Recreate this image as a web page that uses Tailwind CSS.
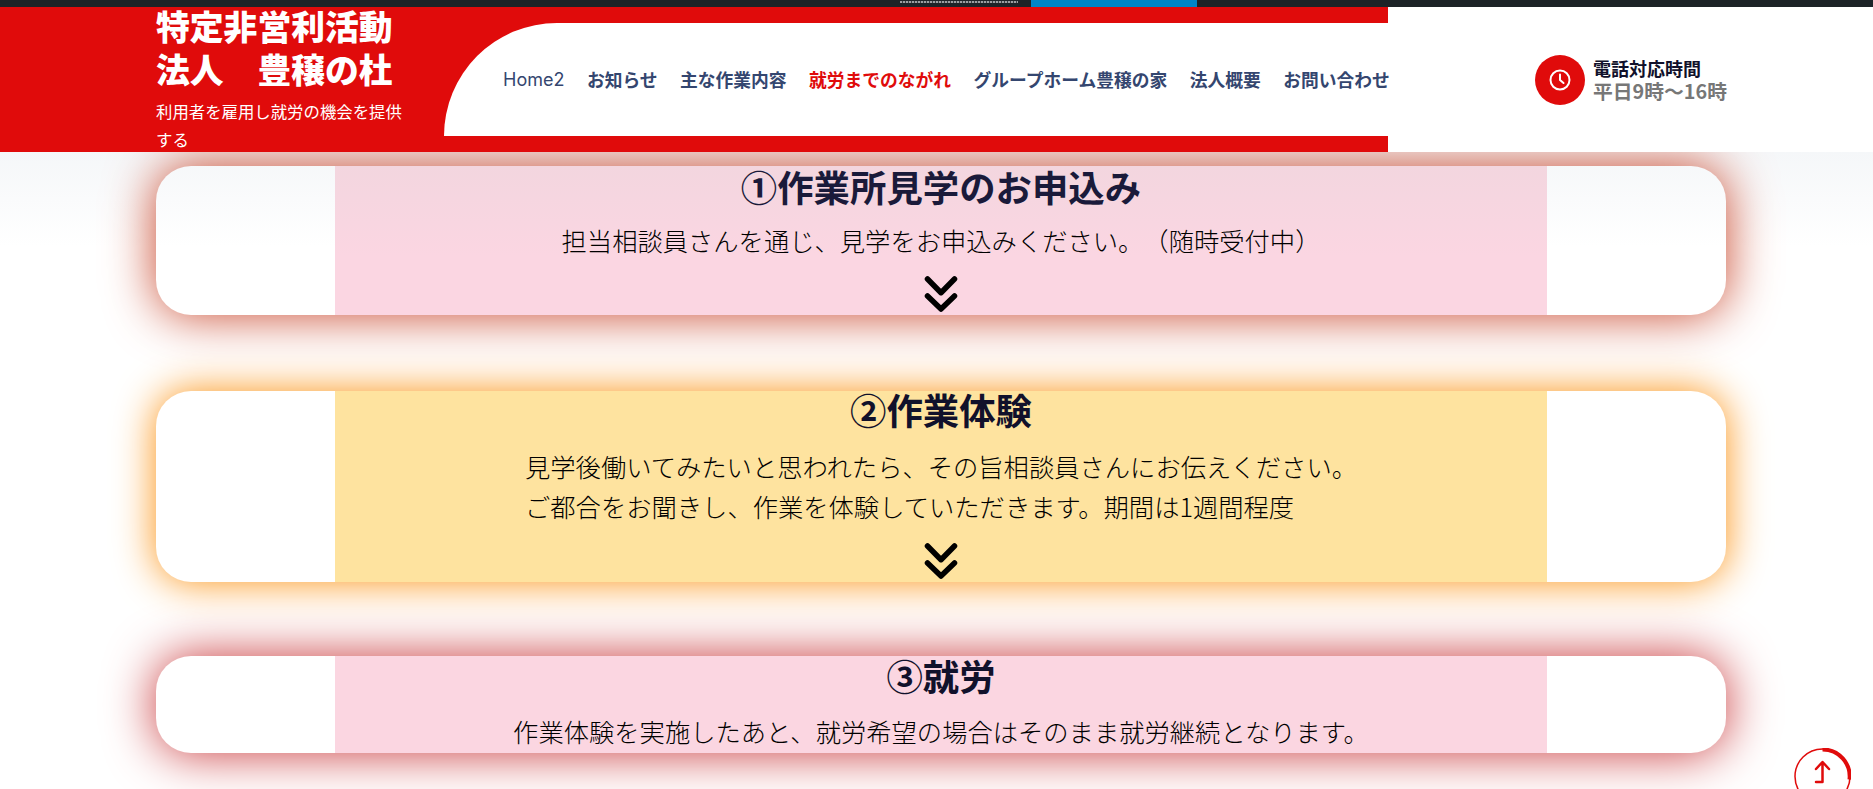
<!DOCTYPE html>
<html lang="ja">
<head>
  <meta charset="UTF-8" />
  <meta name="viewport" content="width=device-width, initial-scale=1.0"/>
  <title>作業所見学の流れ</title>
  <script src="https://cdn.jsdelivr.net/npm/@tailwindcss/browser@4"></script>
</head>
<body class="relative h-screen overflow-hidden bg-white font-['Noto_Sans_CJK_JP',sans-serif] text-[#11112b] [text-spacing-trim:space-all]">

  <!-- Admin bar -->
  <div class="relative z-10 flex h-[7px] bg-[#1d2327] pl-[900px]">
    <div class="mt-px h-[2px] w-[118px] bg-[repeating-linear-gradient(90deg,#9a9ea1_0,#9a9ea1_2px,#3c4246_2px,#3c4246_3px)]"></div>
    <div class="ml-[13px] h-full w-[166px] bg-[#0085c8]"></div>
  </div>

  <!-- Header -->
  <header class="relative z-10 flex h-[145px] bg-white">
    <div class="flex w-[1388px] bg-[#e00b0b] pl-[156px]">
      <div class="w-[288px] shrink-0 text-white">
        <h1 class="-mt-[3px] w-[250px] text-[33.8px] leading-[43px] font-black">特定非営利活動 法人　豊穣の杜</h1>
        <p class="mt-[7px] w-[250px] text-[16.4px] leading-[28px]">利用者を雇用し就労の機会を提供する</p>
      </div>
      <nav class="my-4 flex flex-1 items-center gap-[22.5px] rounded-tl-[113px] bg-white pl-[59px] text-[17.75px] font-semibold whitespace-nowrap text-[#34466f]">
        <a class="font-['Inter',sans-serif] text-[18px] font-normal">Home2</a>
        <a>お知らせ</a>
        <a>主な作業内容</a>
        <a class="text-[#e00b0b]">就労までのながれ</a>
        <a>グループホーム豊穣の家</a>
        <a>法人概要</a>
        <a>お問い合わせ</a>
      </nav>
    </div>
    <div class="flex flex-1 items-center pl-[147px]">
      <div class="flex h-[50px] w-[50px] items-center justify-center rounded-full bg-[#e00b0b]">
        <svg class="h-[24px] w-[24px]" viewBox="0 0 24 24" fill="none" stroke="#fff" stroke-width="2" stroke-linecap="round" stroke-linejoin="round"><circle cx="12" cy="12" r="9.5"/><path d="M12 6.5V12l3.5 3"/></svg>
      </div>
      <div class="ml-[8px] font-bold">
        <p class="text-[18px] leading-[21px] font-semibold">電話対応時間</p>
        <p class="text-[19.8px] leading-[23px] text-[#777]">平日9時～16時</p>
      </div>
    </div>
  </header>

  <!-- Steps -->
  <main class="bg-[linear-gradient(#f5f7f9,#fff_95px)] px-[156px] pt-[14px]">

    <section class="h-[149px] w-[1570px] rounded-[35px] shadow-[0_0_50px_#c8452a]">
      <div class="mx-[179px] h-full bg-[linear-gradient(#f3d6df,#fbd6e2_90px)] text-center">
        <h2 class="text-[36.4px] leading-[40px] font-bold text-[#1a1a3a]">①作業所見学のお申込み</h2>
        <p class="mt-[14px] text-[25.3px] leading-[40px] font-light text-black">担当相談員さんを通じ、見学をお申込みください。（随時受付中）</p>
        <svg class="mx-auto mt-[15px] h-[38px] w-[36px]" viewBox="0 0 36 38" fill="none" stroke="#000" stroke-width="5.5" stroke-linecap="round" stroke-linejoin="round"><path d="M4.5 4L18 17.7 31.5 4"/><path d="M4.5 21L18 34l13.5-13"/></svg>
      </div>
    </section>

    <section class="mt-[76px] h-[191px] w-[1570px] rounded-[35px] shadow-[0_0_40px_#fb9111]">
      <div class="mx-[179px] h-full bg-[#fee39f] text-center">
        <h2 class="text-[36.4px] leading-[37px] font-bold">②作業体験</h2>
        <div class="mt-[18px] pl-[190px] text-left text-[25.3px] leading-[40px] font-light text-black">
          <p>見学後働いてみたいと思われたら、その旨相談員さんにお伝えください。</p>
          <p>ご都合をお聞きし、作業を体験していただきます。期間は1週間程度</p>
        </div>
        <svg class="mx-auto mt-[16px] h-[38px] w-[36px]" viewBox="0 0 36 38" fill="none" stroke="#000" stroke-width="5.5" stroke-linecap="round" stroke-linejoin="round"><path d="M4.5 4L18 17.7 31.5 4"/><path d="M4.5 21L18 34l13.5-13"/></svg>
      </div>
    </section>

    <section class="mt-[74px] h-[97px] w-[1570px] rounded-[35px] shadow-[0_0_50px_#c83538]">
      <div class="mx-[179px] h-full bg-[#fbd6e1] text-center">
        <h2 class="text-[36.4px] leading-[38px] font-bold">③就労</h2>
        <p class="mt-[17px] text-[25.3px] leading-[40px] font-light text-black">作業体験を実施したあと、就労希望の場合はそのまま就労継続となります。</p>
      </div>
    </section>
  </main>

  <!-- Scroll to top -->
  <button class="absolute top-[748px] left-[1794px] h-[57px] w-[57px] rounded-full bg-white">
    <svg class="h-[57px] w-[57px]" viewBox="0 0 57 57" fill="none" stroke="#e00b0b" stroke-linecap="round" stroke-linejoin="round">
      <circle cx="28.5" cy="28.5" r="27.5" stroke-width="1.5"/>
      <path d="M28.5 1.5a27 27 0 0 1 27 30" stroke-width="4" stroke-linecap="butt"/>
      <path d="M22 34h6.5V15M22 21l6.5-7 6.5 7" stroke-width="2.5"/>
    </svg>
  </button>

</body>
</html>
